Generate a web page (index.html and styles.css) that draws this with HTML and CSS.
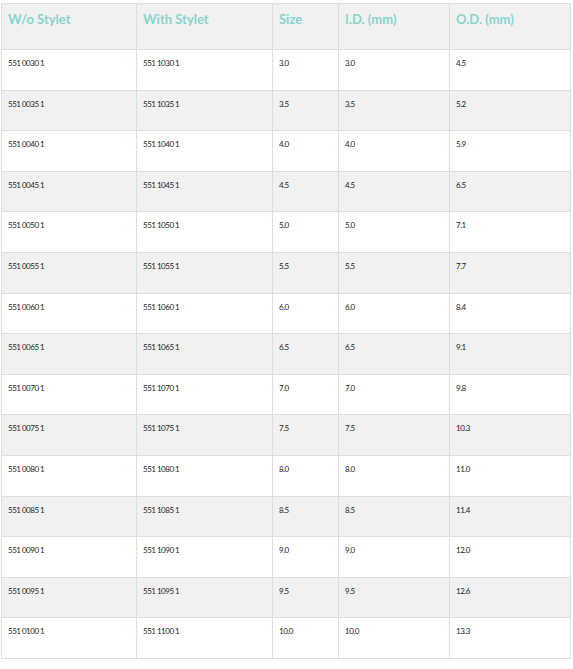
FILE: index.html
```html
<!DOCTYPE html>
<html>
<head>
<meta charset="utf-8">
<link rel="stylesheet" href="styles.css">
</head>
<body>
<div class="wrap">
<table class="spec">
<colgroup>
<col class="c1"><col class="c2"><col class="c3"><col class="c4"><col class="c5">
</colgroup>
<thead>
<tr><th>W/o Stylet</th><th>With Stylet</th><th>Size</th><th>I.D. (mm)</th><th>O.D. (mm)</th></tr>
</thead>
<tbody>
<tr><td>551 0030 1</td><td>551 1030 1</td><td>3.0</td><td>3.0</td><td>4.5</td></tr>
<tr><td>551 0035 1</td><td>551 1035 1</td><td>3.5</td><td>3.5</td><td>5.2</td></tr>
<tr><td>551 0040 1</td><td>551 1040 1</td><td>4.0</td><td>4.0</td><td>5.9</td></tr>
<tr><td>551 0045 1</td><td>551 1045 1</td><td>4.5</td><td>4.5</td><td>6.5</td></tr>
<tr><td>551 0050 1</td><td>551 1050 1</td><td>5.0</td><td>5.0</td><td>7.1</td></tr>
<tr><td>551 0055 1</td><td>551 1055 1</td><td>5.5</td><td>5.5</td><td>7.7</td></tr>
<tr><td>551 0060 1</td><td>551 1060 1</td><td>6.0</td><td>6.0</td><td>8.4</td></tr>
<tr><td>551 0065 1</td><td>551 1065 1</td><td>6.5</td><td>6.5</td><td>9.1</td></tr>
<tr><td>551 0070 1</td><td>551 1070 1</td><td>7.0</td><td>7.0</td><td>9.8</td></tr>
<tr><td>551 0075 1</td><td>551 1075 1</td><td>7.5</td><td>7.5</td><td>10.3</td></tr>
<tr><td>551 0080 1</td><td>551 1080 1</td><td>8.0</td><td>8.0</td><td>11.0</td></tr>
<tr><td>551 0085 1</td><td>551 1085 1</td><td>8.5</td><td>8.5</td><td>11.4</td></tr>
<tr><td>551 0090 1</td><td>551 1090 1</td><td>9.0</td><td>9.0</td><td>12.0</td></tr>
<tr><td>551 0095 1</td><td>551 1095 1</td><td>9.5</td><td>9.5</td><td>12.6</td></tr>
<tr><td>551 0100 1</td><td>551 1100 1</td><td>10.0</td><td>10.0</td><td>13.3</td></tr>
</tbody>
</table>
</div>
</body>
</html>
```
FILE: styles.css
```css
html, body {
  margin: 0;
  padding: 0;
  background: #ffffff;
}
.wrap {
  padding: 3px 0 0 1px;
}
.spec {
  border-collapse: collapse;
  table-layout: fixed;
  width: 569px;
  font-family: "Lato", "Open Sans", sans-serif;
}
.c1 { width: 135px; }
.c2 { width: 136px; }
.c3 { width: 66px; }
.c4 { width: 111px; }
.c5 { width: 121px; }
.spec th, .spec td {
  border: 1px solid #dcdde0;
  text-align: left;
  vertical-align: top;
  padding: 0 6px;
}
.spec th {
  height: 46px;
  box-sizing: border-box;
  padding-top: 7px;
  background: #f1f1f1;
  color: #88d3ce;
  font-size: 13px;
  font-weight: 700;
  line-height: 16px;
}
.spec td {
  height: 40.6px;
  box-sizing: border-box;
  padding-top: 8px;
  font-size: 8px;
  letter-spacing: -0.5px;
  line-height: 10px;
  color: #222222;
}
.spec tbody tr:nth-child(even) td {
  background: #f1f1f1;
}
```
